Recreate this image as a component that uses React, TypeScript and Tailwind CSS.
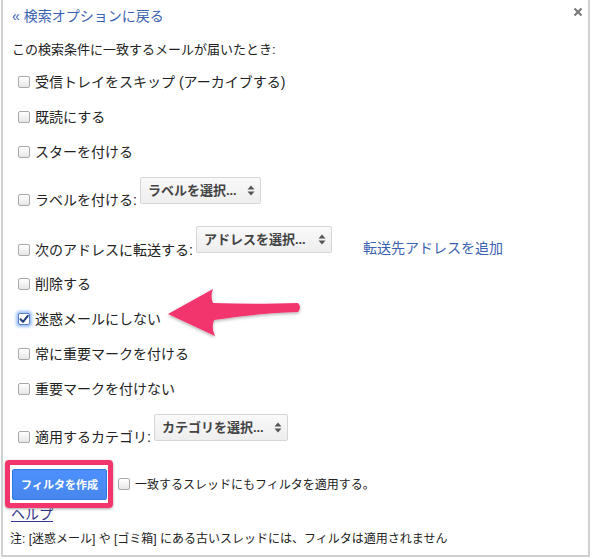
import React from "react";

const font = { fontFamily: '"Liberation Sans", "Noto Sans CJK JP", sans-serif' };

function Box({ checked = false }: { checked?: boolean }) {
  if (checked) {
    return (
      <span className="relative inline-flex w-[12px] h-[12px] shrink-0 rounded-[2px] border border-[#5b7fc7] bg-white shadow-[0_0_3px_2px_rgba(77,144,254,0.55)]">
        <svg viewBox="0 0 12 12" className="absolute left-[-1px] top-[-1px] w-[12px] h-[12px]">
          <path d="M2.5 6.2 L5 8.8 L9.8 2.8" fill="none" stroke="#1f3c7a" strokeWidth="2" strokeLinecap="round" strokeLinejoin="round" />
        </svg>
      </span>
    );
  }
  return (
    <span className="inline-block w-[12px] h-[12px] shrink-0 rounded-[2px] border border-[#a9a9a9] bg-linear-to-b from-white to-[#e6e6e6]" />
  );
}

function Arrows() {
  return (
    <svg width="8" height="11" viewBox="0 0 8 11" className="shrink-0">
      <path d="M4 0.5 L7.5 4.5 H0.5 Z" fill="#555" />
      <path d="M4 10.5 L7.5 6.5 H0.5 Z" fill="#555" />
    </svg>
  );
}

function Select({ label, w }: { label: string; w: string }) {
  return (
    <div
      className={`${w} h-[27px] inline-flex items-center justify-between shrink-0 rounded-[2px] border border-[#d6d6d6] bg-linear-to-b from-[#f9f9f9] to-[#eeeeee] pl-[7px] pr-[5px] text-[13px] font-bold text-[#444] leading-[16px]`}
    >
      <span>{label}</span>
      <Arrows />
    </div>
  );
}

function Row({ label, checked }: { label: string; checked?: boolean }) {
  return (
    <div className="h-[35px] flex items-center pl-[15px] gap-[5px]">
      <Box checked={checked} />
      <span className="text-[14px] leading-[20px] text-[#222]">{label}</span>
    </div>
  );
}

export default function App() {
  return (
    <div className="relative w-[592px] h-[559px] bg-white overflow-hidden" style={font}>
      <div className="relative ml-[1px] w-[589px] h-[557px] border-l-[2px] border-r-[2px] border-b-[2px] border-[#d0d0d0] bg-white">
        <div className="pt-[6px] pl-[9px] text-[14px] leading-[20px] text-[#3a62b0]">« 検索オプションに戻る</div>
        <div className="mt-[14px] pl-[9px] text-[13px] leading-[20px] text-[#222]">この検索条件に一致するメールが届いたとき:</div>

        <div className="mt-[4px]">
          <Row label="受信トレイをスキップ (アーカイブする)" />
          <Row label="既読にする" />
          <Row label="スターを付ける" />

          <div className="flex items-end pl-[15px] pt-[8px]">
            <div className="flex items-center gap-[5px] h-[20px]">
              <Box />
              <span className="text-[14px] leading-[20px] text-[#222]">ラベルを付ける:</span>
            </div>
            <div className="ml-[3px] mb-[6px]">
              <Select label="ラベルを選択..." w="w-[121px]" />
            </div>
          </div>

          <div className="flex items-end pl-[15px] pt-[16px] pb-[6px]">
            <div className="flex items-center gap-[5px] h-[20px]">
              <Box />
              <span className="text-[14px] leading-[20px] text-[#222]">次のアドレスに転送する:</span>
            </div>
            <div className="ml-[3px] mb-[7px]">
              <Select label="アドレスを選択..." w="w-[136px]" />
            </div>
            <span className="ml-[31px] mb-[2px] text-[14px] leading-[20px] text-[#3a62b0]">転送先アドレスを追加</span>
          </div>

          <Row label="削除する" />
          <Row label="迷惑メールにしない" checked />
          <Row label="常に重要マークを付ける" />
          <Row label="重要マークを付けない" />

          <div className="flex items-end pl-[15px] pt-[8px]">
            <div className="flex items-center gap-[5px] h-[20px]">
              <Box />
              <span className="text-[14px] leading-[20px] text-[#222]">適用するカテゴリ:</span>
            </div>
            <div className="ml-[3px] mb-[6px]">
              <Select label="カテゴリを選択..." w="w-[134px]" />
            </div>
          </div>
        </div>

        <div className="mt-[22px] flex items-center pl-[9px]">
          <div className="w-[95px] h-[31px] flex items-center justify-center rounded-[2px] border border-[#3079ed] bg-linear-to-b from-[#4d90fe] to-[#4787ed] text-white text-[11px] font-bold leading-[14px]">
            フィルタを作成
          </div>
          <span className="ml-[11px]"><Box /></span>
          <span className="ml-[5px] text-[12px] leading-[16px] text-[#222]">一致するスレッドにもフィルタを適用する。</span>
        </div>

        <div className="mt-[6px] pl-[8px] text-[14px] leading-[16px]">
          <span className="text-[#33338a] underline underline-offset-[2px]">ヘルプ</span>
        </div>
        <div className="mt-[9px] pl-[7px] text-[12px] leading-[16px] text-[#222]">
          注: [迷惑メール] や [ゴミ箱] にある古いスレッドには、フィルタは適用されません
        </div>

        <svg className="absolute left-[570px] top-[7px]" width="10" height="10" viewBox="0 0 10 10">
          <path d="M1.5 1.5 L8.5 8.5 M8.5 1.5 L1.5 8.5" stroke="#7a7a7a" strokeWidth="2.2" />
        </svg>
      </div>

      {/* highlight rectangle */}
      <div className="absolute left-[5px] top-[460px] w-[108px] h-[48px] rounded-[4px] border-[5px] border-[#f2356d] shadow-[0_1px_3px_rgba(0,0,0,0.35)] pointer-events-none" />

      {/* arrow */}
      <svg className="absolute left-0 top-0 pointer-events-none" width="592" height="559" viewBox="0 0 592 559">
        <defs>
          <filter id="sh" x="-10%" y="-20%" width="130%" height="160%">
            <feDropShadow dx="0" dy="1.5" stdDeviation="1.5" floodColor="#000" floodOpacity="0.3" />
          </filter>
        </defs>
        <path
          d="M168,314 L213,289 Q210,296 213,303 C240,304 268,304 298,303 Q302,307 298,312 C268,313 240,316 214,320 Q211,328 215,336 Z"
          fill="#f2356d"
          filter="url(#sh)"
        />
      </svg>
    </div>
  );
}
